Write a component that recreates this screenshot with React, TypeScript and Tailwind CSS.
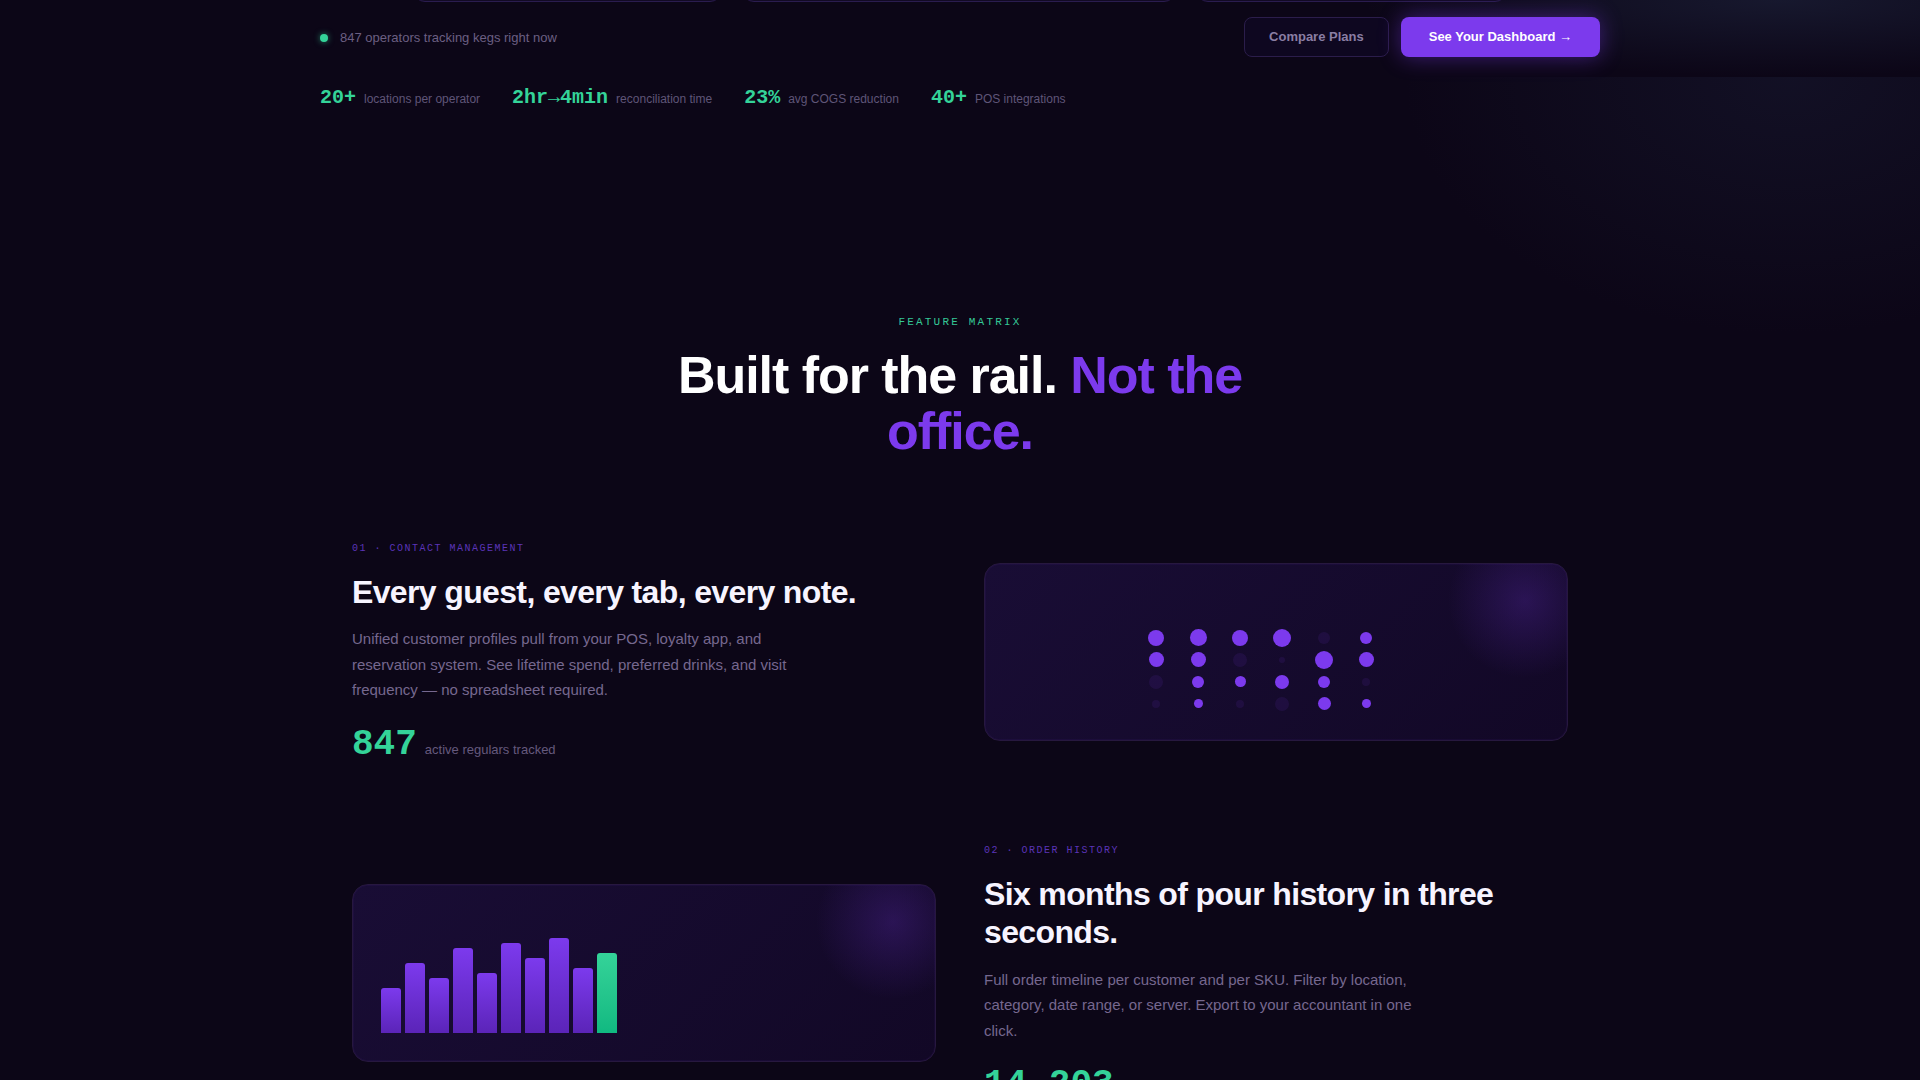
import React from 'react';

type Dot = [number, number];

const dotColumns: Dot[][] = [
  [[16, 1], [15, 1], [14, 0.1], [8, 0.1]],
  [[17, 1], [15, 1], [12, 1], [9, 1]],
  [[16, 1], [14, 0.1], [11, 1], [8, 0.1]],
  [[18, 1], [6, 0.1], [14, 1], [14, 0.1]],
  [[12, 0.1], [18, 1], [12, 1], [13, 1]],
  [[12, 1], [15, 1], [8, 0.1], [9, 1]],
];

const bars = [45, 70, 55, 85, 60, 90, 75, 95, 65, 80];

const topStats = [
  { value: '20+', label: 'locations per operator' },
  { value: '2hr→4min', label: 'reconciliation time' },
  { value: '23%', label: 'avg COGS reduction' },
  { value: '40+', label: 'POS integrations' },
];

const VisualCard: React.FC<{ children: React.ReactNode }> = ({ children }) => (
  <div className="relative overflow-hidden rounded-2xl border border-[#27183f] bg-[linear-gradient(135deg,#190d35,#120826)] p-7 shadow-[inset_0_0_0_1px_rgba(124,58,237,0.06)]">
    <div className="pointer-events-none absolute right-[-38px] top-[-43px] h-[160px] w-[160px] bg-[radial-gradient(circle,rgba(124,58,237,0.22),transparent_68%)]" />
    <div className="relative h-[120px]">{children}</div>
  </div>
);

const FeatureText: React.FC<{
  tag: string;
  title: string;
  body: string;
  stat: string;
  statLabel: string;
}> = ({ tag, title, body, stat, statLabel }) => (
  <div>
    <p className="font-['Liberation_Mono',monospace] text-[10px] uppercase leading-4 tracking-[0.15em] text-[#5b34b8]">{tag}</p>
    <h3 className="mt-4 text-[32px] font-bold leading-[1.2] tracking-[-0.02em] text-[#f7f4ff]">{title}</h3>
    <p className="mt-[15px] max-w-md text-[15px] leading-[1.7] text-[#76688f]">{body}</p>
    <div className="mt-6 flex items-baseline gap-2">
      <span className="font-['Liberation_Mono',monospace] text-4xl font-bold leading-none text-[#34d399]">{stat}</span>
      <span className="text-[13px] text-[#65597d]">{statLabel}</span>
    </div>
  </div>
);

export default function App() {
  return (
    <div className="relative min-h-screen overflow-hidden bg-[#0c0617] font-['Liberation_Sans',Arial,sans-serif] text-white">
      {/* ambient glows */}
      <div className="pointer-events-none absolute right-0 top-0 h-[77px] w-[560px] bg-[radial-gradient(ellipse_at_75%_0%,rgba(36,46,74,0.45),transparent_70%)]" />
      <div className="pointer-events-none absolute right-0 top-[77px] h-[260px] w-[520px] bg-[radial-gradient(ellipse_at_75%_0%,rgba(32,38,66,0.32),transparent_70%)]" />

      {/* hero tail */}
      <div className="relative mx-auto max-w-7xl">
        <div className="-mt-[58px] flex justify-center gap-5">
          <div className="h-[60px] w-[309px] rounded-xl border border-[#2a1c4f] bg-[#120a24]" />
          <div className="h-[60px] w-[434px] rounded-xl border border-[#2a1c4f] bg-[#120a24]" />
          <div className="h-[60px] w-[311px] rounded-xl border border-[#2a1c4f] bg-[#120a24]" />
        </div>

        <div className="mt-[15px] flex items-center justify-between">
          <div className="flex items-center gap-3 pt-px">
            <span className="h-2 w-2 rounded-full bg-[#34d399] shadow-[0_0_6px_rgba(52,211,153,0.6)]" />
            <span className="text-[13px] text-[#6b5f82]">847 operators tracking kegs right now</span>
          </div>
          <div className="flex items-center gap-3">
            <button className="h-10 rounded-lg border border-[#2b1d4b] bg-[#0e0720] px-6 text-[13px] font-bold text-[#8a7ea3]">
              Compare Plans
            </button>
            <button className="h-10 rounded-lg bg-[#7c3aed] px-7 text-[13px] font-bold text-white shadow-[0_0_22px_rgba(124,58,237,0.45)]">
              See Your Dashboard →
            </button>
          </div>
        </div>

        <div className="mt-[27px] flex items-baseline gap-8">
          {topStats.map(s => (
            <div key={s.value} className="flex items-baseline gap-2">
              <span className="font-['Liberation_Mono',monospace] text-xl font-bold leading-7 text-[#34d399]">{s.value}</span>
              <span className="text-xs text-[#5f5577]">{s.label}</span>
            </div>
          ))}
        </div>
      </div>

      {/* feature matrix */}
      <section className="relative mx-auto max-w-7xl px-8 pt-[202px] pb-24">
        <p className="text-center font-['Liberation_Mono',monospace] text-[11px] uppercase leading-4 tracking-[0.2em] text-[#34c796]">
          Feature Matrix
        </p>
        <h2 className="mx-auto mt-[17px] max-w-2xl text-center text-[52px] font-bold leading-[56px] tracking-[-0.02em] text-white">
          Built for the rail. <span className="text-[#7c3aed]">Not the office.</span>
        </h2>

        <div className="mt-[82px] grid grid-cols-2 items-center gap-x-12 gap-y-[80px]">
          <FeatureText
            tag="01 · Contact Management"
            title="Every guest, every tab, every note."
            body="Unified customer profiles pull from your POS, loyalty app, and reservation system. See lifetime spend, preferred drinks, and visit frequency — no spreadsheet required."
            stat="847"
            statLabel="active regulars tracked"
          />
          <VisualCard>
            <div className="flex h-full items-end justify-center pr-[6px]">
              <div className="-mb-px flex">
                {dotColumns.map((col, ci) => (
                  <div key={ci} className="flex w-[42px] flex-col gap-1">
                    {col.map(([size, op], ri) => (
                      <div key={ri} className="flex h-[18px] w-[18px] items-center justify-center">
                        <span
                          className="rounded-full bg-[#7c3aed]"
                          style={{ width: size, height: size, opacity: op }}
                        />
                      </div>
                    ))}
                  </div>
                ))}
              </div>
            </div>
          </VisualCard>

          <VisualCard>
            <div className="flex h-full items-end gap-1">
              {bars.map((h, i) => (
                <div
                  key={i}
                  className={
                    i === bars.length - 1
                      ? 'w-5 rounded-t-[3px] bg-gradient-to-b from-[#34d399] to-[#10b981]'
                      : 'w-5 rounded-t-[3px] bg-gradient-to-b from-[#7c3aed] to-[#5b24b8]'
                  }
                  style={{ height: h }}
                />
              ))}
            </div>
          </VisualCard>
          <FeatureText
            tag="02 · Order History"
            title="Six months of pour history in three seconds."
            body="Full order timeline per customer and per SKU. Filter by location, category, date range, or server. Export to your accountant in one click."
            stat="14,203"
            statLabel="orders on record"
          />
        </div>
      </section>
    </div>
  );
}
